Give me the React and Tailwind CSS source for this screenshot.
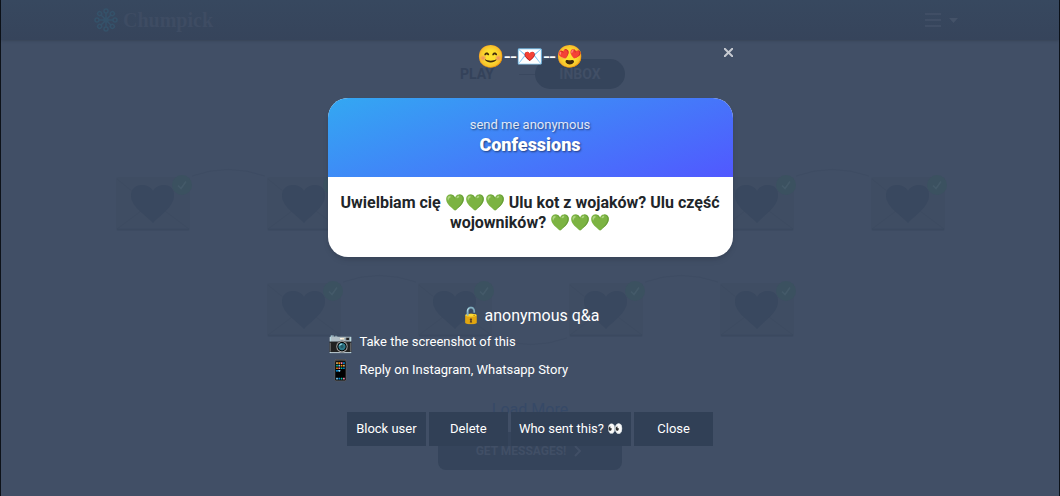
import { useState } from "react";
import clsx from "clsx";

const rows = [
    [1, 2, 3, 4, 5, 6],
    [7, 8, 9, 10],
];

const FlowerLogo = () => (
    <svg width="26" height="26" viewBox="0 0 26 26" fill="none" stroke="#35526a" strokeWidth="1.5">
        {[0, 45, 90, 135, 180, 225, 270, 315].map((angle) => (
            <g key={angle} transform={`rotate(${angle} 13 13)`}>
                <path d="M13 11V6" />
                <circle cx="13" cy="4" r="2" />
            </g>
        ))}
        <circle cx="13" cy="13" r="2" fill="#35526a" />
    </svg>
);

const Envelope = () => (
    <svg className="block" width="74" height="54" viewBox="0 0 74 54">
        <rect width="74" height="54" rx="3" fill="#3f4d63" />
        <path d="M1 2l16 13M73 2L57 15M1 52l24-18M73 52L49 34" stroke="#3d4b61" fill="none" />
        <path d="M1 52.500h72" stroke="#3b495f" strokeWidth="1.500" />
        <path
            d="M37 46C30 38 15 30 15 18.500C15 12 20 8 26 8c5 0 9 2.500 11 6c2-3.500 6-6 11-6c6 0 10 4 10 10.500C58 30 44 38 37 46z"
            fill="#39485f"
        />
    </svg>
);

const Connector = ({ below }) => (
    <svg
        className={clsx("block w-[77px] h-[72px]", below && "rotate-180")}
        viewBox="0 0 77 72"
        fill="none"
        stroke="#3e4c63"
    >
        <path d="M2 8Q38 -5 75 8" />
    </svg>
);

const MessageRow = ({ items }) => (
    <div className="flex items-center justify-center">
        {items.map((id, index) => (
            <div key={id} className="flex items-center">
                {index > 0 && <Connector below={index % 2 === 0} />}
                <div className="relative">
                    <Envelope />
                    <svg className="absolute -top-0.5 -right-0.5" width="20" height="20" viewBox="0 0 20 20">
                        <circle cx="10" cy="10" r="10" fill="#3b5160" />
                        <path d="M6 10.500l3 3 5-7" stroke="#445a69" strokeWidth="1.500" fill="none" />
                    </svg>
                </div>
            </div>
        ))}
    </div>
);

const Inbox = () => (
    <div className="flex flex-col min-h-screen">
        <header className="flex items-center justify-between h-10 pl-[92px] pr-[101px] bg-linear-to-b from-[#37485f] to-[#36445b] shadow-sm">
            <a href="#home" className="flex items-center gap-1">
                <FlowerLogo />
                <span className="font-['Liberation_Serif',serif] font-bold text-xl text-[#3e4c63]">Chumpick</span>
            </a>
            <button aria-label="Menu" className="flex items-center gap-2">
                <svg width="16" height="14" viewBox="0 0 16 14" stroke="#445268" strokeWidth="1.500">
                    <path d="M0 1h16M0 7h16M0 13h16" />
                </svg>
                <svg width="9" height="5" viewBox="0 0 9 5" fill="#445268">
                    <path d="M0 0h9L4.500 5z" />
                </svg>
            </button>
        </header>
        <main className="flex flex-col items-center">
            <nav className="flex items-center mt-[19px] text-sm font-bold">
                <a href="#play" className="w-[84px] text-center text-[#34425a]">PLAY</a>
                <span className="w-4 h-px bg-[#3a485f]" />
                <a href="#inbox" className="flex items-center justify-center w-[90px] h-[30px] rounded-full bg-[#35445b] text-[#414f66]">
                    INBOX
                </a>
            </nav>
            <div className="flex flex-col gap-[34px] mt-[79px]">
                {rows.map((items) => (
                    <MessageRow key={items[0]} items={items} />
                ))}
            </div>
            <button className="mt-[52px] leading-6 text-[#364967]">Load More</button>
            <button className="flex items-center justify-center gap-1 mt-2.5 w-[184px] h-[38px] rounded-lg bg-[#35445b] text-xs font-bold text-[#414f66]">
                GET MESSAGES!
                <svg width="14" height="14" viewBox="0 0 14 14" fill="none" stroke="#414f66" strokeWidth="2">
                    <path d="M5 2l5 5-5 5" />
                </svg>
            </button>
        </main>
    </div>
);

const ActionButton = ({ children, onClick }) => (
    <button
        onClick={onClick}
        className="min-w-[79px] h-[34px] px-2 bg-[#314056] text-[13px] text-white whitespace-nowrap"
    >
        {children}
    </button>
);

const MessageModal = ({ onClose }) => (
    <div className="absolute inset-0 flex justify-center text-white" role="dialog" aria-label="Confession">
        <div className="relative w-full max-w-[405px]">
            <button
                onClick={onClose}
                aria-label="Close message"
                className="absolute top-[46px] -right-0.5 p-0.5"
            >
                <svg width="9" height="9" viewBox="0 0 9 9" stroke="#c6cad1" strokeWidth="2">
                    <path d="M0 0l9 9M9 0L0 9" />
                </svg>
            </button>
            <p className="pt-[42px] text-center text-[22px] leading-[30px]">😊--💌--😍</p>
            <section className="mt-[26px] rounded-[20px] overflow-hidden bg-white shadow-md text-center">
                <div className="h-[79px] pt-[18px] bg-linear-[160deg] from-[#33a8f2] to-[#5158ff] text-shadow-[1px_1px_2px_rgb(0_0_0/0.5)]">
                    <p className="text-[13px] leading-[18px] text-white/85">send me anonymous</p>
                    <h2 className="text-lg leading-[22px] font-black">Confessions</h2>
                </div>
                <p className="px-2 pt-4 pb-6 text-base leading-5 font-bold text-[#212529]">
                    Uwielbiam cię 💚💚💚 Ulu kot z wojaków? Ulu część wojowników? 💚💚💚
                </p>
            </section>
            <p className="mt-[47px] text-center text-base leading-6">🔓 anonymous q&amp;a</p>
            <ul className="text-[13px] leading-7">
                <li className="flex items-center">
                    <span className="w-8 text-xl leading-7">📷</span>
                    Take the screenshot of this
                </li>
                <li className="flex items-center">
                    <span className="w-8 text-xl leading-7">📱</span>
                    Reply on Instagram, Whatsapp Story
                </li>
            </ul>
            <div className="flex justify-center gap-[3px] mt-7">
                <ActionButton>Block user</ActionButton>
                <ActionButton>Delete</ActionButton>
                <ActionButton>Who sent this? 👀</ActionButton>
                <ActionButton onClick={onClose}>Close</ActionButton>
            </div>
        </div>
    </div>
);

const App = () => {
    const [open, setOpen] = useState(true);

    return (
        <div className="relative min-h-screen border-x border-[#0d1219] bg-[#414f66] font-[Roboto,sans-serif]">
            <Inbox />
            {open && <MessageModal onClose={() => setOpen(false)} />}
        </div>
    );
};

export default App;
